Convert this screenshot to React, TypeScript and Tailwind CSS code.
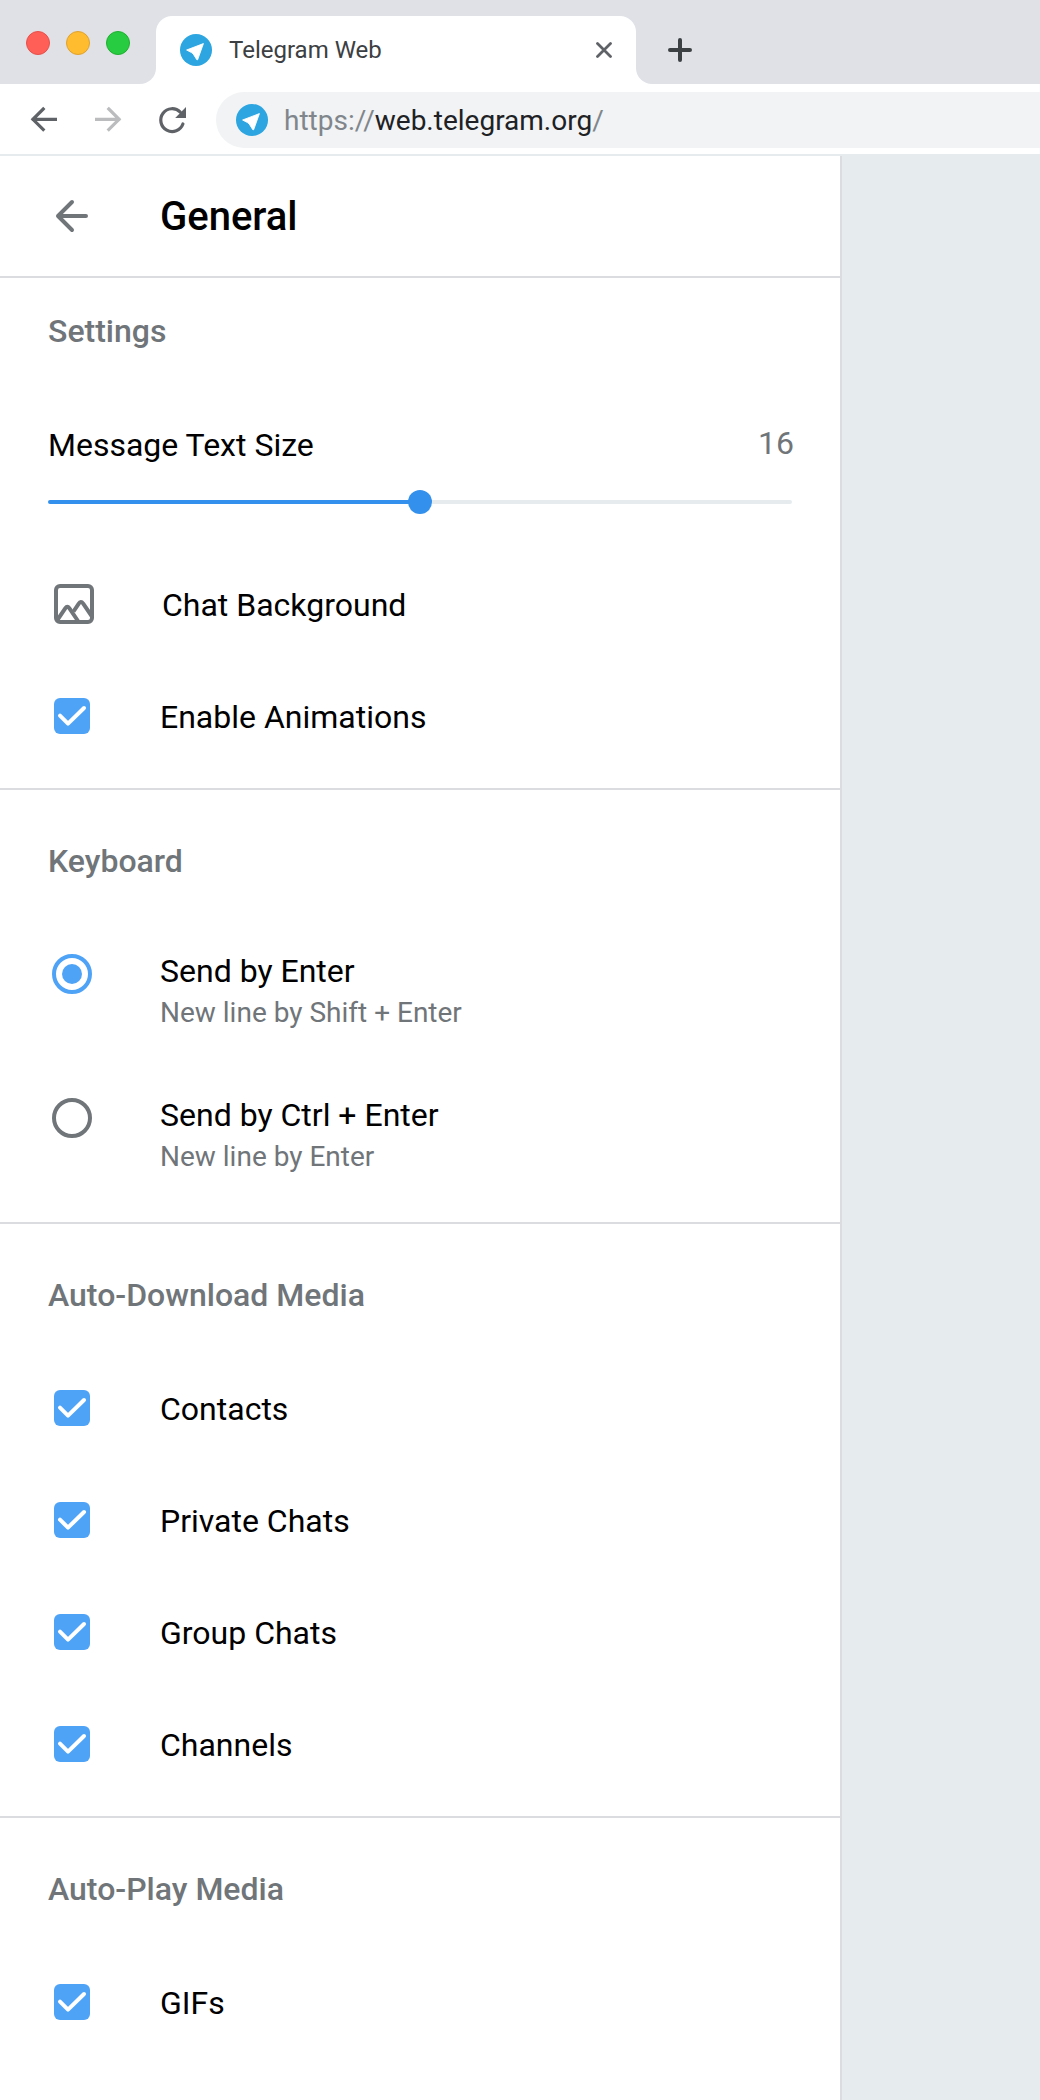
import type { ReactNode } from "react";

function TelegramLogo() {
  return (
    <svg className="size-8 shrink-0" viewBox="0 0 32 32">
      <circle cx="16" cy="16" r="16" fill="#2ca5e0" />
      <path
        d="M6.6 16 L23.4 9.6 L17.6 25.8 L16.8 25.7 L13.2 19.9 L11.5 18.6 Z"
        fill="#fff"
        stroke="#fff"
        strokeWidth="0.9"
        strokeLinejoin="round"
      />
    </svg>
  );
}

function TrafficLights() {
  return (
    <div className="flex h-full w-[156px] items-center gap-4 rounded-br-2xl bg-[#dfe1e6] pt-0.5 pl-[26px]">
      <span className="size-6 rounded-full border border-[#e6504a] bg-[#ff5f57]" />
      <span className="size-6 rounded-full border border-[#e0a22e] bg-[#febc2e]" />
      <span className="size-6 rounded-full border border-[#1faf2f] bg-[#28cc40]" />
    </div>
  );
}

function TabStrip() {
  return (
    <div className="flex h-[84px] bg-white">
      <TrafficLights />
      <div className="w-[480px] bg-[#dfe1e6] pt-4">
        <div className="flex h-full items-center rounded-t-2xl bg-white px-6">
          <TelegramLogo />
          <span className="ml-[17px] text-[24px] leading-7 text-[#3c4043]">Telegram Web</span>
          <svg className="ml-auto size-4" viewBox="0 0 16 16" stroke="#5f6368" strokeWidth="2.8" strokeLinecap="round">
            <path d="M1.5 1.5 L14.5 14.5 M14.5 1.5 L1.5 14.5" />
          </svg>
        </div>
      </div>
      <div className="flex flex-1 items-center rounded-bl-2xl bg-[#dfe1e6] pt-4 pl-8">
        <svg className="size-6" viewBox="0 0 24 24" stroke="#3c4043" strokeWidth="4" strokeLinecap="round">
          <path d="M12 2 V22 M2 12 H22" />
        </svg>
      </div>
    </div>
  );
}

function Toolbar() {
  return (
    <div className="flex h-[72px] items-center border-b-2 border-[#e6ebee] bg-white">
      <div className="flex w-[216px] items-center pl-7">
        <svg className="size-8" viewBox="0 0 32 32" fill="none" stroke="#5f6368" strokeWidth="3.2" strokeLinecap="square">
          <path d="M27.4 16.3 H5.4 M15.2 6 L4.9 16.3 L15.2 26.6" />
        </svg>
        <svg className="ml-8 size-8" viewBox="0 0 32 32" fill="none" stroke="#babcbe" strokeWidth="3.2" strokeLinecap="square">
          <path d="M4.6 16.3 H26.6 M16.8 6 L27.1 16.3 L16.8 26.6" />
        </svg>
        <svg className="ml-8 size-8" viewBox="0 0 32 32" fill="none">
          <path
            d="M26.9 21 A11.4 11.4 0 1 1 24.3 9.1"
            stroke="#5f6368"
            strokeWidth="3.2"
            strokeLinecap="round"
          />
          <path d="M30 4 V15 H19.2 Z" fill="#5f6368" />
        </svg>
      </div>
      <div className="mt-0.5 flex h-14 flex-1 items-center rounded-l-full bg-[#f1f3f4] pl-5">
        <TelegramLogo />
        <span className="mt-px ml-4 text-[28px] leading-[33px] whitespace-nowrap text-[#80868b]">
          https://<span className="text-[#202124]">web.telegram.org</span>/
        </span>
      </div>
    </div>
  );
}

function SectionTitle({ children }: { children: ReactNode }) {
  return <h2 className="px-12 text-[32px] leading-10 font-medium text-[#707579]">{children}</h2>;
}

function Section({ title, children }: { title: string; children: ReactNode }) {
  return (
    <section className="border-b-2 border-[#dadce0] pt-[51px] pb-4 last:border-b-0">
      <SectionTitle>{title}</SectionTitle>
      <div className="pt-[37px]">{children}</div>
    </section>
  );
}

function CheckRow({ label }: { label: string }) {
  return (
    <div className="flex h-28 items-center pl-[54px]">
      <svg className="size-9 shrink-0" viewBox="0 0 36 36" fill="none">
        <rect width="36" height="36" rx="6" fill="#4fa3f7" />
        <path d="M6 17.7 L14 25.6 L30 10" stroke="#fff" strokeWidth="4" strokeLinecap="round" strokeLinejoin="round" />
      </svg>
      <span className="mt-0.5 ml-[70px] text-[32px] leading-10">{label}</span>
    </div>
  );
}

function RadioRow({ label, hint, checked = false }: { label: string; hint: string; checked?: boolean }) {
  return (
    <div className="flex h-36 pl-[52px]">
      <svg className="mt-9 size-10 shrink-0" viewBox="0 0 40 40" fill="none">
        <circle cx="20" cy="20" r="18" stroke={checked ? "#4fa3f7" : "#707579"} strokeWidth="4" />
        {checked && <circle cx="20" cy="20" r="10" fill="#4fa3f7" />}
      </svg>
      <div className="ml-[68px] pt-[33px]">
        <p className="text-[32px] leading-10">{label}</p>
        <p className="mt-[5px] text-[28px] leading-[33px] text-[#707579]">{hint}</p>
      </div>
    </div>
  );
}

function TextSizeSlider() {
  return (
    <div className="px-12">
      <div className="flex justify-between text-[32px] leading-10">
        <span>Message Text Size</span>
        <span className="-mt-0.5 -mr-0.5 text-[#707579]">16</span>
      </div>
      <div className="mt-[25px] flex h-6 w-[744px] items-center">
        <div className="h-1 w-[362px] rounded-l-full bg-[#3390ec]" />
        <div className="relative -mx-0.5 size-6 shrink-0 rounded-full bg-[#3390ec]" />
        <div className="h-1 flex-1 rounded-r-full bg-[#e6ebee]" />
      </div>
    </div>
  );
}

function ChatBackgroundRow() {
  return (
    <div className="flex h-28 items-center pl-[54px]">
      <svg
        className="size-10 shrink-0"
        viewBox="0 0 40 40"
        fill="none"
        stroke="#707579"
        strokeWidth="4"
        strokeLinejoin="round"
      >
        <rect x="2" y="2" width="36" height="36" rx="4" />
        <path d="M3 36.5 L11.4 24.2 Q13.3 21.4 15.3 24.2 L24 37" />
        <path d="M19.5 27.5 L24.6 19.8 Q26.8 16.4 29.2 19.6 L38 32.5" />
      </svg>
      <span className="mt-0.5 ml-[68px] text-[32px] leading-10">Chat Background</span>
    </div>
  );
}

export default function App() {
  return (
    <div className="flex h-[2100px] w-[1040px] flex-col overflow-hidden bg-[#e6ebee] font-['Roboto',sans-serif] text-black">
      <TabStrip />
      <Toolbar />
      <div className="flex flex-1">
        <main className="w-[842px] border-r-2 border-[#dadce0] bg-white">
          <header className="flex h-[122px] items-center border-b-2 border-[#dadce0] pl-12">
            <svg
              className="size-12"
              viewBox="0 0 48 48"
              fill="none"
              stroke="#707579"
              strokeWidth="4"
              strokeLinecap="round"
              strokeLinejoin="round"
            >
              <path d="M38 24 H10 M24 10 L10 24 L24 38" />
            </svg>
            <h1 className="mt-px ml-16 text-[40px] leading-[47px] font-medium">General</h1>
          </header>
          <section className="border-b-2 border-[#dadce0] pt-[33px] pb-4">
            <SectionTitle>Settings</SectionTitle>
            <div className="pt-[74px]">
              <TextSizeSlider />
            </div>
            <div className="pt-[34px]">
              <ChatBackgroundRow />
              <CheckRow label="Enable Animations" />
            </div>
          </section>
          <Section title="Keyboard">
            <RadioRow label="Send by Enter" hint="New line by Shift + Enter" checked />
            <RadioRow label="Send by Ctrl + Enter" hint="New line by Enter" />
          </Section>
          <Section title="Auto-Download Media">
            <CheckRow label="Contacts" />
            <CheckRow label="Private Chats" />
            <CheckRow label="Group Chats" />
            <CheckRow label="Channels" />
          </Section>
          <Section title="Auto-Play Media">
            <CheckRow label="GIFs" />
          </Section>
        </main>
      </div>
    </div>
  );
}
